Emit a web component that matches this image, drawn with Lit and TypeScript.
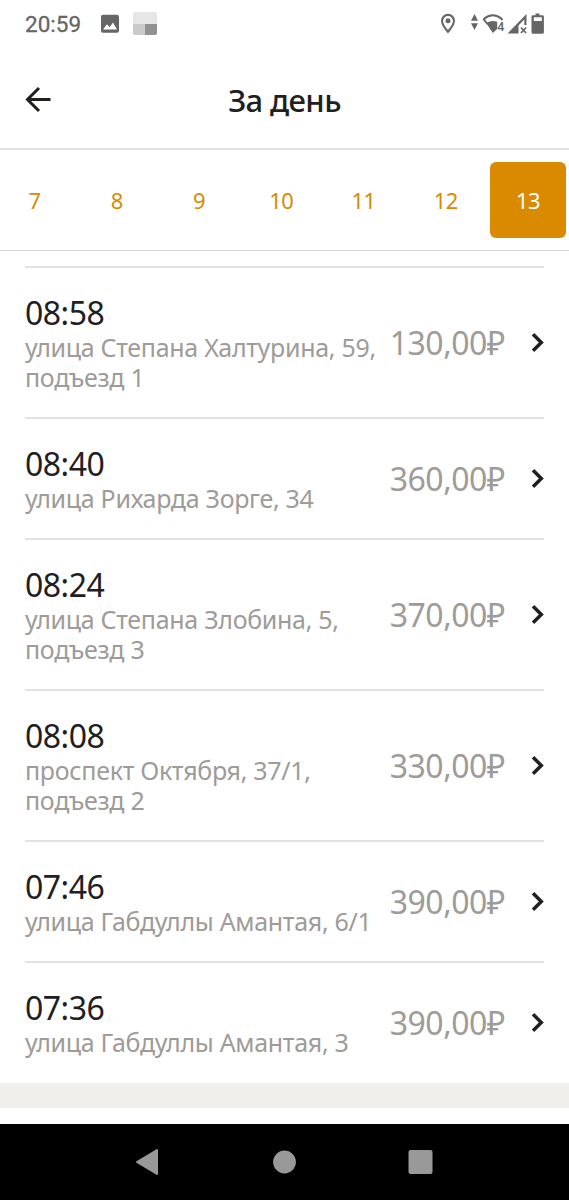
import { LitElement, html, css } from 'lit';
import { customElement, property, state } from 'lit/decorators.js';

interface Ride {
  time: string;
  address: string;
  price: string;
}

@customElement('status-bar')
export class StatusBar extends LitElement {
  static styles = css`
    :host {
      display: flex;
      justify-content: space-between;
      height: 50px;
      padding: 0 24px 2px 25px;
      box-sizing: border-box;
      align-items: center;
      color: #666;
      font-family: Roboto, sans-serif;
    }
    .left {
      display: flex;
      align-items: center;
    }
    .clock {
      width: 75px;
      font-size: 22.5px;
      line-height: 26px;
      -webkit-text-stroke: 0.3px #666;
    }
    .generation {
      font-size: 12.5px;
      font-weight: 500;
    }
    svg {
      display: block;
    }
  `;

  render() {
    return html`
      <div class="left">
        <div class="clock">20:59</div>
        <svg width="58" height="48" viewBox="100 0 58 48">
          <rect x="101" y="14.8" width="18" height="18" rx="2" fill="#666" />
          <path d="M103 29.5l4-5.2 2.6 3 3.4-4.8 4 7z" fill="#fff" />
          <rect x="133" y="12" width="24" height="23" rx="2" fill="#e6e6e6" />
          <path d="M133 24h12v11h-10q-2 0-2-2z" fill="#cacaca" />
          <path d="M145 24h12v9q0 2-2 2h-10z" fill="#919191" />
        </svg>
      </div>
      <svg width="107" height="48" viewBox="438 0 107 48" fill="#666">
        <path
          fill-rule="evenodd"
          d="M448 13.8a7 7 0 0 0-7 7c0 5.1 7 12.7 7 12.7s7-7.6 7-12.7a7 7 0 0 0-7-7zm0 2.2a4.9 4.9 0 0 1 4.9 4.8c0 3-2.9 7-4.9 9.3-2-2.3-4.9-6.3-4.9-9.3a4.9 4.9 0 0 1 4.9-4.8z"
        />
        <circle cx="448" cy="20.8" r="2.5" />
        <path d="M471 20.8l3.5-6.8 3.5 6.8zM471 23.3h7l-3.5 6.8z" />
        <path
          d="M483.6 19.2q9.2-7.8 18.6 0M483.4 18.8l4 5.200M502.4 18.8l-1.200 1.400"
          fill="none"
          stroke="#666"
          stroke-width="1.9"
        />
        <path d="M486.2 23q5.600-3.400 11-1.200v7.200l-4.400 4z" />
        <text class="generation" x="497.2" y="30.5">4</text>
        <path d="M507.5 33.5L526.5 14v11h-2.2v-5.500l-5.8 6v8z" />
        <path d="M521 27.5l5 5.5M526 27.5l-5 5.5" stroke="#666" stroke-width="1.7" />
        <path
          fill-rule="evenodd"
          d="M535.5 13.5h4v1.7h3q1.4 0 1.4 1.4v15.6q0 1.5-1.5 1.5h-9.400q-1.500 0-1.500-1.500V16.6q0-1.400 1.400-1.400h2.600zM533.8 17.3v3.600h8v-3.600z"
        />
      </svg>
    `;
  }
}

@customElement('ride-row')
export class RideRow extends LitElement {
  @property({ attribute: false }) ride!: Ride;

  static styles = css`
    :host {
      display: flex;
      align-items: center;
      margin: 0 25px;
      padding: 25px 0 24px;
      border-top: 2px solid #e2e2e0;
    }
    .info {
      flex: 1;
      min-width: 0;
    }
    .time {
      font-size: 32px;
      line-height: 40px;
      letter-spacing: -0.5px;
      color: #21201f;
    }
    .address {
      margin: -1px 0 1px;
      font-size: 25px;
      line-height: 30px;
      letter-spacing: -0.3px;
      color: #9e9b98;
      white-space: pre-line;
    }
    .price {
      font-size: 32px;
      line-height: 40px;
      letter-spacing: -0.5px;
      color: #9e9b98;
      white-space: nowrap;
    }
    svg {
      display: block;
      margin-left: 25px;
      flex: none;
    }
  `;

  render() {
    return html`
      <div class="info">
        <div class="time">${this.ride.time}</div>
        <div class="address">${this.ride.address}</div>
      </div>
      <div class="price">${this.ride.price}</div>
      <svg width="14" height="20" viewBox="0 0 14 20">
        <path d="M3 1.200l8.300 8.300-8.300 8.300" fill="none" stroke="#21201f" stroke-width="3.500" />
      </svg>
    `;
  }
}

@customElement('app-root')
export class AppRoot extends LitElement {
  @state() private days = [7, 8, 9, 10, 11, 12, 13];
  @state() private selectedDay = 13;
  @state() private rides: Ride[] = [
    { time: '08:58', address: 'улица Степана Халтурина, 59,\nподъезд 1', price: '130,00₽' },
    { time: '08:40', address: 'улица Рихарда Зорге, 34', price: '360,00₽' },
    { time: '08:24', address: 'улица Степана Злобина, 5,\nподъезд 3', price: '370,00₽' },
    { time: '08:08', address: 'проспект Октября, 37/1,\nподъезд 2', price: '330,00₽' },
    { time: '07:46', address: 'улица Габдуллы Амантая, 6/1', price: '390,00₽' },
    { time: '07:36', address: 'улица Габдуллы Амантая, 3', price: '390,00₽' },
  ];

  static styles = css`
    :host {
      display: flex;
      flex-direction: column;
      height: 1200px;
      overflow: hidden;
      background: #fff;
      font-family: 'Noto Sans', sans-serif;
    }
    header {
      display: grid;
      grid-template-columns: 28px 1fr 28px;
      align-items: center;
      height: 100px;
      padding: 1px 25px 0;
      box-sizing: border-box;
      border-bottom: 2px solid #e2e2df;
    }
    header svg {
      display: block;
    }
    h1 {
      margin: 0;
      font-size: 31px;
      line-height: 40px;
      font-weight: 500;
      letter-spacing: -0.6px;
      text-align: center;
      color: #21201f;
    }
    .days {
      display: flex;
      justify-content: flex-end;
      align-items: center;
      gap: 6.25px;
      height: 101px;
      padding-right: 3px;
      box-sizing: border-box;
      border-bottom: 1px solid #d8d8d4;
    }
    .day {
      flex: none;
      width: 76px;
      height: 76px;
      border-radius: 6px;
      line-height: 76px;
      font-size: 22px;
      letter-spacing: -0.5px;
      text-align: center;
      color: #da8900;
      cursor: pointer;
    }
    .day.selected {
      background: #da8a00;
      color: #fff;
    }
    .rides {
      padding-top: 15px;
    }
    .footer-band {
      height: 25px;
      margin-top: 1px;
      background: #f0efeb;
    }
    nav {
      display: flex;
      height: 76px;
      margin-top: auto;
      background: #000;
      align-items: center;
      justify-content: center;
    }
  `;

  render() {
    return html`
      <status-bar></status-bar>
      <header>
        <svg width="28" height="28" viewBox="0 0 28 28">
          <path d="M25.5 13.500H2.500M14 2L2.500 13.500 14 25" fill="none" stroke="#21201f" stroke-width="3" />
        </svg>
        <h1>За день</h1>
      </header>
      <div class="days">
        ${this.days.map(day => html`
          <div
            class="day ${day === this.selectedDay ? 'selected' : ''}"
            @click=${() => this.selectedDay = day}
          >${day}</div>
        `)}
      </div>
      <div class="rides">
        ${this.rides.map(ride => html`<ride-row .ride=${ride}></ride-row>`)}
      </div>
      <div class="footer-band"></div>
      <nav>
        <svg width="300" height="30" viewBox="135 1147 300 30" fill="#999">
          <path d="M157 1150v24l-20-12z" stroke="#999" stroke-width="2" stroke-linejoin="round" />
          <circle cx="284.5" cy="1162" r="11.4" />
          <rect x="408.5" y="1150" width="24" height="24" rx="2" />
        </svg>
      </nav>
    `;
  }
}
